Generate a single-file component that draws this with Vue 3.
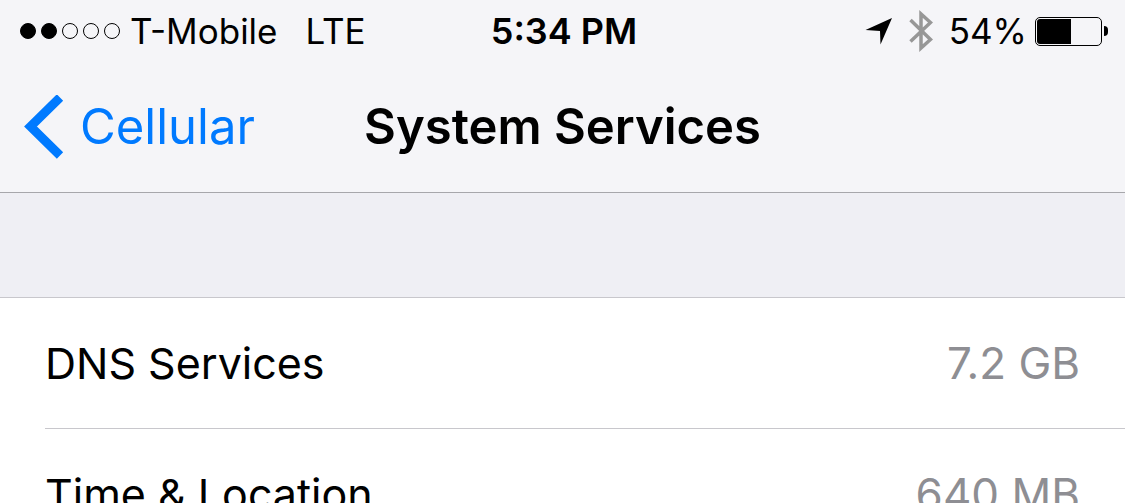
<script setup>
const signal = [true, true, false, false, false]
const services = [
  { name: 'DNS Services', usage: '7.2 GB' },
  { name: 'Time & Location', usage: '640 MB' },
]
const battery = 54
</script>

<template>
  <div class="screen">
    <header class="top">
      <div class="status">
        <div class="carrier">
          <span class="dots" role="img" aria-label="Signal: 2 of 5">
            <i v-for="(on, i) in signal" :key="i" class="dot" :class="{ on }"></i>
          </span>
          <span>T-Mobile</span>
          <span class="network">LTE</span>
        </div>
        <time class="clock">5:34 PM</time>
        <div class="indicators">
          <svg class="location" width="28" height="28" viewBox="0 0 28 28" aria-hidden="true">
            <path d="M27 1 L15.500 27.500 L15 14 L0.500 13 Z" />
          </svg>
          <svg class="bluetooth" width="24" height="42" viewBox="0 0 24 42" aria-hidden="true">
            <path d="M1.500 10 L21.500 29.500 L12 38 V4 L21.500 12.500 L1.500 31.500" />
          </svg>
          <span>{{ battery }}%</span>
          <span class="battery" role="img" aria-label="Battery">
            <span class="cell"><i class="charge" :style="{ width: battery + '%' }"></i></span>
            <i class="tip"></i>
          </span>
        </div>
      </div>
      <nav class="nav">
        <button class="back" type="button">
          <svg width="40" height="64" viewBox="0 0 40 64" aria-hidden="true">
            <path d="M36 2.500 L6.500 31.500 L36 60.500" />
          </svg>
          Cellular
        </button>
        <h1 class="title">System Services</h1>
      </nav>
    </header>
    <main>
      <ul class="list">
        <li v-for="s in services" :key="s.name" class="row">
          <span>{{ s.name }}</span>
          <span class="usage">{{ s.usage }}</span>
        </li>
      </ul>
    </main>
  </div>
</template>

<style>
body {
  margin: 0;
  background: #efeff4;
}
</style>

<style scoped>
.screen {
  height: 100vh;
  overflow: hidden;
  background: #efeff4;
  color: #000;
  font-family: Inter, "Liberation Sans", sans-serif;
}
.top {
  background: #f5f5f8;
  border-bottom: 1px solid #a7a7ab;
}
.status {
  display: grid;
  grid-template-columns: 1fr auto 1fr;
  align-items: center;
  height: 62px;
  padding: 0 17px 0 20px;
  font-size: 35px;
  line-height: 42px;
}
.carrier,
.indicators,
.dots,
.battery {
  display: flex;
  align-items: center;
}
.dots {
  gap: 5px;
  margin-right: 10px;
}
.dot {
  box-sizing: border-box;
  width: 16px;
  height: 16px;
  border: 1px solid #000;
  border-radius: 50%;
}
.dot.on {
  background: #000;
}
.network {
  margin-left: 28px;
}
.clock {
  font-size: 36px;
  font-weight: 600;
}
.indicators {
  justify-content: flex-end;
}
.location {
  margin-right: 16px;
}
.bluetooth {
  margin-right: 16px;
  fill: none;
  stroke: #979797;
  stroke-width: 3.5;
}
.battery {
  gap: 2px;
  margin-left: 8px;
}
.cell {
  box-sizing: border-box;
  display: flex;
  width: 67px;
  height: 29px;
  padding: 1px;
  border: 1px solid #000;
  border-radius: 5px;
}
.charge {
  background: #000;
  border-radius: 3px 0 0 3px;
}
.tip {
  width: 4px;
  height: 10px;
  background: #000;
  border-radius: 0 4px 4px 0;
}
.nav {
  display: grid;
  grid-template-columns: 1fr auto 1fr;
  align-items: center;
  height: 130px;
  padding: 0 24px;
}
.back {
  display: flex;
  align-items: center;
  gap: 16px;
  justify-self: start;
  padding: 0;
  border: 0;
  background: none;
  color: #007aff;
  font: inherit;
  font-size: 49px;
  line-height: 60px;
}
.back svg {
  fill: none;
  stroke: #007aff;
  stroke-width: 9;
}
.title {
  margin: 0;
  font-size: 49px;
  font-weight: 600;
  line-height: 60px;
}
.list {
  margin: 104px 0 0;
  padding: 0 0 0 45px;
  list-style: none;
  background: #fff;
  border-top: 1px solid #c8c7cc;
}
.row {
  display: flex;
  align-items: baseline;
  justify-content: space-between;
  height: 130px;
  padding-right: 45px;
  border-bottom: 1px solid #c8c7cc;
  font-size: 43px;
  line-height: 130px;
}
.usage {
  color: #8e8e93;
  font-size: 44px;
}
</style>
